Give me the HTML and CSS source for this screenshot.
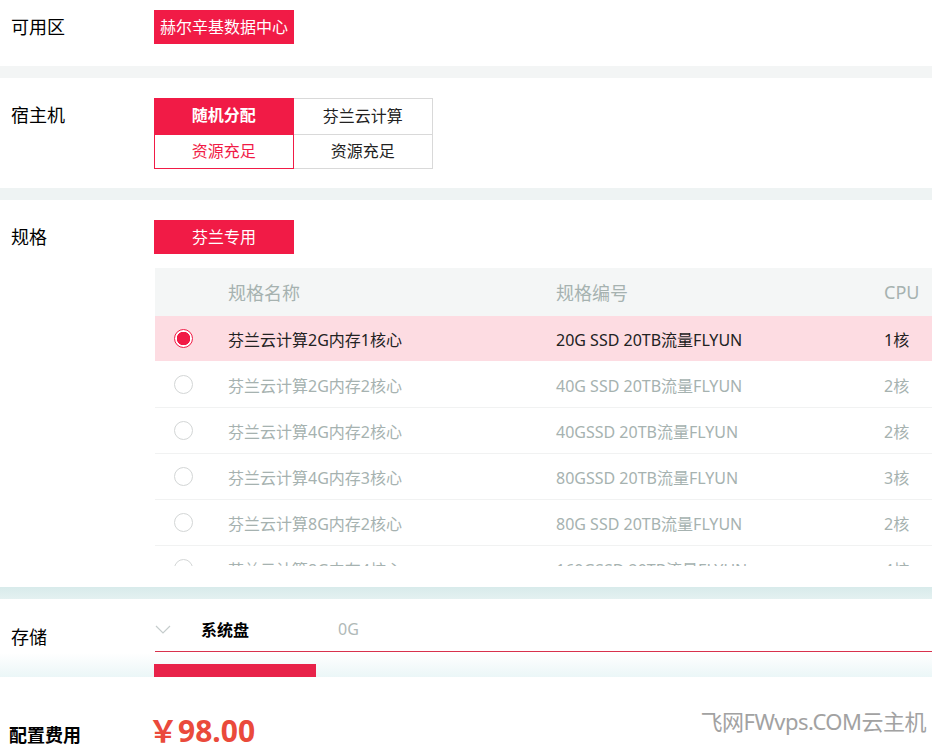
FILE: index.html
```html
<!DOCTYPE html>
<html lang="zh-CN">
<head>
    <meta charset="UTF-8">
    <title>配置</title>
    <link rel="stylesheet" href="styles.css">
</head>
<body>

    <div class="section sec-zone">
        <div class="label">可用区</div>
        <div class="content">
            <span class="btn">赫尔辛基数据中心</span>
        </div>
    </div>
    <div class="band band-1"></div>

    <div class="section sec-host">
        <div class="label">宿主机</div>
        <div class="content">
            <div class="hosts">
                <div class="host active">
                    <div class="host-name">随机分配</div>
                    <div class="host-state">资源充足</div>
                </div>
                <div class="host">
                    <div class="host-name">芬兰云计算</div>
                    <div class="host-state">资源充足</div>
                </div>
            </div>
        </div>
    </div>
    <div class="band band-2"></div>

    <div class="section sec-spec">
        <div class="label">规格</div>
        <div class="content">
            <span class="btn">芬兰专用</span>
            <div class="spec-box">
                <table class="spec">
                    <thead>
                        <tr><th class="c-radio"></th><th class="c-name">规格名称</th><th class="c-code">规格编号</th><th>CPU</th></tr>
                    </thead>
                    <tbody>
                        <tr class="on"><td><span class="radio"></span></td><td>芬兰云计算2G内存1核心</td><td>20G SSD 20TB流量FLYUN</td><td>1核</td></tr>
                        <tr><td><span class="radio"></span></td><td>芬兰云计算2G内存2核心</td><td>40G SSD 20TB流量FLYUN</td><td>2核</td></tr>
                        <tr><td><span class="radio"></span></td><td>芬兰云计算4G内存2核心</td><td>40GSSD 20TB流量FLYUN</td><td>2核</td></tr>
                        <tr><td><span class="radio"></span></td><td>芬兰云计算4G内存3核心</td><td>80GSSD 20TB流量FLYUN</td><td>3核</td></tr>
                        <tr><td><span class="radio"></span></td><td>芬兰云计算8G内存2核心</td><td>80G SSD 20TB流量FLYUN</td><td>2核</td></tr>
                        <tr><td><span class="radio"></span></td><td>芬兰云计算8G内存4核心</td><td>160GSSD 20TB流量FLYUN</td><td>4核</td></tr>
                    </tbody>
                </table>
            </div>
        </div>
    </div>
    <div class="band band-3"></div>

    <div class="section sec-disk">
        <div class="label">存储</div>
        <div class="content">
            <div class="disk">
                <svg class="chev" width="16" height="9" viewBox="0 0 16 9"><path d="M1 1 L8 8 L15 1" fill="none" stroke="#c5cccc" stroke-width="1.2"/></svg>
                <span class="disk-name">系统盘</span>
                <span class="disk-size">0G</span>
            </div>
            <div class="disk-bar"></div>
        </div>
    </div>

    <div class="section sec-fee">
        <div class="label fee-label">配置费用</div>
        <div class="price">￥98.00</div>
        <div class="mark">飞网FWvps.COM云主机</div>
    </div>

</body>
</html>
```

FILE: styles.css
```css
body {
    margin: 0;
    font-family: "Noto Sans", "Noto Sans CJK SC", sans-serif;
    color: #222;
    background: white;
}

.section {
    display: flex;
    background: white;
}

.label {
    width: 143px;
    padding-left: 11px;
    font-size: 18px;
    line-height: 34px;
    color: black;
}

.content {
    flex: 1;
    min-width: 0;
}

.btn {
    display: inline-block;
    width: 140px;
    height: 34px;
    line-height: 34px;
    text-align: center;
    background: #f11b46;
    color: white;
    font-size: 16px;
}

.band { height: 12px; }
.band-1 { background: #f3f5f5; }
.band-2 { background: #eef3f3; }
.band-3 { background: linear-gradient(#d8ebeb, #e4f1f1); }

.sec-zone { padding: 10px 0 22px; }
.sec-zone .btn { width: auto; padding: 0 6px; }

.sec-host { padding: 20px 0 19px; }
.hosts {
    display: flex;
    width: 279px;
}
.host {
    width: 139px;
    border: 1px solid #d9d9d9;
    border-left: none;
    text-align: center;
    font-size: 16px;
}
.host-name {
    height: 35px;
    line-height: 35px;
    border-bottom: 1px solid #d9d9d9;
}
.host-state {
    height: 33px;
    line-height: 33px;
}
.host.active {
    width: 140px;
    border: none;
}
.host.active .host-name {
    background: #f11b46;
    color: white;
    font-weight: bold;
    height: 36px;
    border-bottom: none;
}
.host.active .host-state {
    color: #f11b46;
    border: 1px solid #f11b46;
    height: 33px;
    line-height: 33px;
}

.sec-spec { padding: 20px 0 21px; }
.spec-box {
    margin: 14px 0 0 1px;
    height: 298px;
    overflow: hidden;
}
.spec {
    width: 790px;
    border-collapse: collapse;
    font-size: 16px;
    color: #a6b2b0;
}
.spec th {
    height: 48px;
    background: #f4f6f6;
    font-weight: normal;
    font-size: 18px;
    text-align: left;
    padding: 0;
}
.spec td {
    height: 45px;
    padding: 0;
    border-bottom: 1px solid #f1f2f2;
}
.c-radio { width: 73px; }
.c-name { width: 328px; }
.c-code { width: 328px; }
.spec tr.on td {
    background: #fddce2;
    color: #222;
    border-bottom-color: white;
}
.radio {
    display: block;
    box-sizing: border-box;
    width: 19px;
    height: 19px;
    margin-left: 19px;
    border: 1px solid #d3d6d6;
    border-radius: 50%;
    background: white;
}
.on .radio {
    border: 1.5px solid #f11b46;
    background: radial-gradient(circle, #f11b46 0, #f11b46 6.5px, white 7px);
}

.sec-disk {
    padding-top: 14px;
    background: linear-gradient(white 0, white 54px, #eaf6f7 79px);
}
.sec-disk .label { line-height: 18px; padding-top: 15px; }
.disk {
    display: flex;
    align-items: center;
    height: 38px;
    margin-left: 1px;
    border-bottom: 1px solid #d8324d;
}
.chev { margin: 0 30px 6px 0; }
.disk-name {
    width: 137px;
    font-size: 16px;
    font-weight: bold;
    color: black;
    margin-bottom: 6px;
}
.disk-size {
    font-size: 16px;
    color: #b0b9b8;
    margin-bottom: 6px;
}
.disk-bar {
    width: 162px;
    height: 13px;
    margin-top: 12px;
    background: #e8234a;
}

.sec-fee {
    height: 72px;
    align-items: flex-start;
}
.fee-label {
    width: 139px;
    padding: 44px 0 0 9px;
    line-height: 28px;
    font-weight: bold;
}
.price {
    margin-top: 37px;
    font-size: 30px;
    line-height: 34px;
    font-weight: bold;
    color: #ea4a3b;
}
.mark {
    margin: 30px 6px 0 auto;
    font-size: 22px;
    line-height: 28px;
    color: #a2a2a2;
    letter-spacing: -0.5px;
}
```
